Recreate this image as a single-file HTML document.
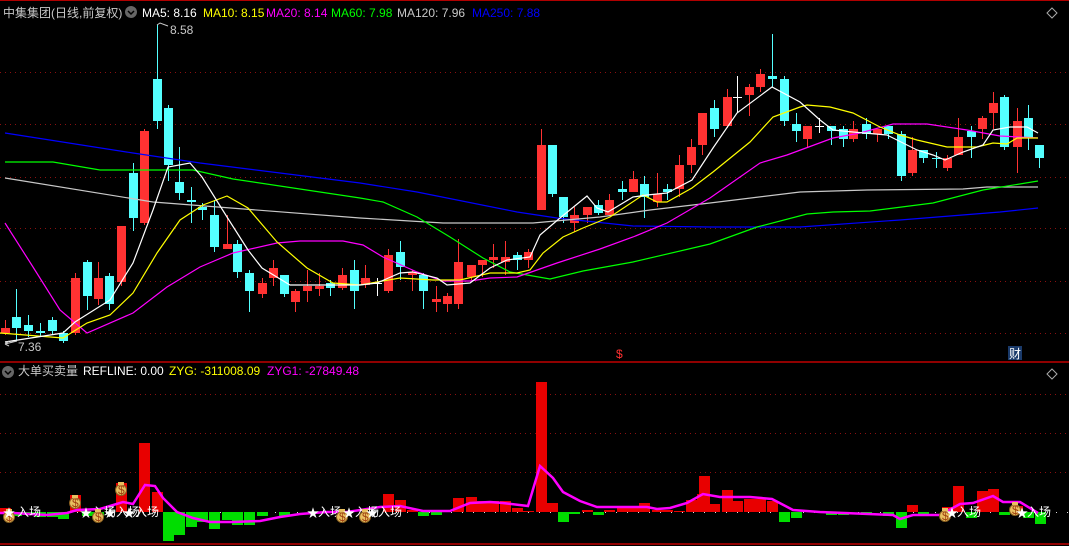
<!DOCTYPE html>
<html><head><meta charset="utf-8">
<style>
html,body{margin:0;padding:0;background:#000;width:1069px;height:546px;overflow:hidden}
svg{display:block}
text{font-family:"Liberation Sans","Noto Sans CJK SC",sans-serif;font-size:12px}
</style></head><body>
<svg id="s" width="1069" height="546" xmlns="http://www.w3.org/2000/svg">
<rect width="1069" height="546" fill="#000"/>
<line x1="0" y1="0.5" x2="1069" y2="0.5" stroke="#b00000"/>
<g stroke="#8a1010" stroke-dasharray="1,4" stroke-width="1">
<line x1="0" y1="72.5" x2="1069" y2="72.5"/><line x1="0" y1="124.5" x2="1069" y2="124.5"/>
<line x1="0" y1="177.5" x2="1069" y2="177.5"/><line x1="0" y1="228.5" x2="1069" y2="228.5"/>
<line x1="0" y1="281.5" x2="1069" y2="281.5"/><line x1="0" y1="333.5" x2="1069" y2="333.5"/>
<line x1="0" y1="394.5" x2="1069" y2="394.5"/><line x1="0" y1="433.5" x2="1069" y2="433.5"/>
<line x1="0" y1="472.5" x2="1069" y2="472.5"/>
</g>
<line x1="0" y1="512.5" x2="1069" y2="512.5" stroke="#ddd" stroke-dasharray="1,10"/>
<line x1="0" y1="362" x2="1069" y2="362" stroke="#c00000" stroke-width="1.5"/>
<line x1="0" y1="544" x2="1069" y2="544" stroke="#c00000" stroke-width="1.5"/>
<g id="bars"></g>
<g id="cand"></g>
<g fill="none" stroke-width="1.2">
<polyline stroke="#0000ff" points="5,133 133,153 200,163 360,183 417,192 517,212 557,218 633,226 710,227 800,227 900,220 1000,212 1038,208"/>
<polyline stroke="#c8c8c8" points="5,178 153,202 360,218 443,223 533,223 600,217 650,210 710,203 800,192 867,190 963,189 987,187 1038,187"/>
<polyline stroke="#00ff00" points="5,162 53,162 100,170 193,170 233,179 360,198 383,202 417,217 450,237 483,258 510,272 550,279 583,271 633,262 710,244 757,227 807,214 833,212 870,211 933,203 983,190 1038,181"/>
<polyline stroke="#ff00ff" points="5,223 33,267 60,310 87,333 133,313 167,287 200,267 233,253 277,243 300,241 343,241 363,245 383,257 417,272 443,281 470,281 490,278 517,277 537,270 557,263 600,249 633,237 667,223 710,198 760,163 787,155 833,138 860,133 893,124 927,124 967,130 1000,136 1038,138"/>
<polyline stroke="#ffff00" points="0,333 63,338 87,323 110,315 133,293 157,253 180,220 203,205 227,196 248,208 277,242 307,268 333,283 360,285 400,278 433,280 460,280 490,273 517,273 530,270 543,253 563,237 583,228 610,217 643,195 657,202 667,202 692,188 713,172 750,142 773,117 800,107 807,105 830,107 853,113 880,127 900,135 917,140 947,147 977,147 993,143 1007,144 1017,138 1038,138"/>
<polyline stroke="#ffffff" points="5,342 63,333 75,322 110,300 133,263 153,210 168,167 190,163 202,177 227,217 248,250 262,268 290,285 360,285 377,283 400,273 413,272 437,278 447,285 470,283 490,268 507,260 530,257 540,235 560,218 587,196 597,208 608,212 633,197 647,195 667,193 692,180 713,148 737,113 772,87 800,102 820,120 833,130 853,132 887,135 917,150 933,155 945,160 963,152 983,145 993,130 1010,127 1027,127 1038,133"/>
<polyline stroke="#ff00ff" stroke-width="2.5" points="0,513 13,513 47,515 67,513 77,510 100,509 123,502 133,504 145,485 155,486 163,498 177,512 193,518 210,522 233,522 260,521 280,517 300,514 313,513 327,512 347,512 367,509 380,507 400,506 423,511 450,511 470,503 490,502 503,503 528,506 540,466 553,478 563,492 580,501 597,507 647,507 657,509 670,508 687,503 703,494 720,497 750,497 772,499 793,510 820,512 893,515 900,519 913,515 940,515 960,504 973,503 993,496 1003,502 1020,502 1038,513"/>
</g>
<g id="marks"></g>
<!-- labels -->
<text x="3" y="17" fill="#c8c8c8" font-size="13">中集集团(日线,前复权)</text>
<circle cx="131" cy="12" r="6" fill="#666"/><path d="M128 11 l3 3 l3 -3" stroke="#000" stroke-width="1.5" fill="none"/>
<text x="142" y="17" fill="#fff">MA5: 8.16</text>
<text x="203" y="17" fill="#ffff00">MA10: 8.15</text>
<text x="266" y="17" fill="#ff00ff">MA20: 8.14</text>
<text x="331" y="17" fill="#00ff00">MA60: 7.98</text>
<text x="397" y="17" fill="#c8c8c8">MA120: 7.96</text>
<text x="472" y="17" fill="#0000ff">MA250: 7.88</text>
<path d="M1052 8 l5 5 l-5 5 l-5 -5z" fill="none" stroke="#aaa"/>
<path d="M1052 369 l5 5 l-5 5 l-5 -5z" fill="none" stroke="#aaa"/>
<path d="M157 25 l3 -2 l8 3" stroke="#ccc" fill="none"/>
<text x="170" y="34" fill="#c8c8c8">8.58</text>
<path d="M6 341 l0 3 M5 344 l12 -3 M5 344 l4 -3 M5 344 l4 2" stroke="#ccc" fill="none"/>
<text x="18" y="351" fill="#c8c8c8">7.36</text>
<text x="616" y="358" fill="#ff3030" font-size="11">$</text>
<rect x="1008" y="346" width="14" height="14" fill="#1a3a6a"/>
<text x="1009" y="358" fill="#fff" font-size="12">财</text>
<circle cx="8" cy="372" r="6" fill="#666"/><path d="M5 371 l3 3 l3 -3" stroke="#000" stroke-width="1.5" fill="none"/>
<text x="18" y="375" fill="#c8c8c8" font-size="13">大单买卖量</text>
<text x="83" y="375" fill="#fff">REFLINE: 0.00</text>
<text x="169" y="375" fill="#ffff00">ZYG: -311008.09</text>
<text x="267" y="375" fill="#ff00ff">ZYG1: -27849.48</text>
</svg>
<script>
var NS="http://www.w3.org/2000/svg";
function el(p,t,a){var e=document.createElementNS(NS,t);for(var k in a)e.setAttribute(k,a[k]);p.appendChild(e);return e;}
var C=[[5,'r',328,333,320,335],[16,'c',317,328,289,341],[28,'c',325,331,315,337],[40,'c',331,333,323,337],[52,'c',320,331,317,335],[63,'c',333,341,331,343],[75,'r',278,333,273,335],[87,'c',262,296,260,310],[98,'r',278,299,262,305],[109,'c',276,304,273,310],[121,'r',226,282,226,286],[133,'c',173,218,163,231],[144,'r',131,223,129,225],[157,'c',79,121,25,129],[168,'c',108,165,105,181],[179,'c',182,193,147,200],[191,'c',200,202,187,223],[202,'c',207,210,203,220],[214,'c',215,247,200,252],[227,'r',244,249,215,249],[237,'c',244,272,240,278],[249,'c',273,291,270,312],[262,'r',283,294,278,298],[273,'r',268,278,260,286],[284,'c',275,294,275,297],[295,'r',291,302,289,312],[307,'r',286,291,270,302],[319,'r',286,289,273,296],[330,'c',283,288,280,296],[342,'r',275,288,268,290],[354,'c',270,291,260,309],[365,'r',278,285,265,288],[377,'w',283,284,278,296],[388,'r',255,291,249,293],[400,'c',252,267,241,280],[412,'r',272,275,270,291],[423,'c',275,291,273,309],[436,'r',299,302,286,312],[447,'r',296,304,293,312],[458,'r',262,304,239,309],[471,'r',265,277,265,280],[482,'r',260,265,260,277],[493,'r',257,260,244,268],[505,'r',257,262,241,275],[517,'c',255,260,252,270],[528,'r',252,260,249,268],[541,'r',145,210,129,210],[552,'c',145,194,145,197],[563,'c',197,217,197,223],[574,'r',215,223,207,232],[587,'r',207,215,207,223],[598,'c',205,213,200,215],[609,'r',200,215,194,215],[622,'c',189,192,181,200],[633,'r',179,192,171,192],[644,'c',184,197,176,218],[657,'r',194,202,173,207],[667,'c',189,192,184,200],[679,'r',165,189,155,197],[691,'r',147,165,139,173],[702,'r',113,145,113,155],[714,'c',108,129,100,137],[727,'r',97,126,89,128],[737,'w',97,98,76,113],[749,'r',87,95,84,116],[760,'r',74,87,69,92],[772,'c',76,79,34,87],[784,'c',79,121,76,126],[796,'c',124,131,113,142],[807,'r',126,139,126,147],[819,'w',126,127,118,133],[831,'c',126,131,126,145],[843,'c',129,139,126,147],[853,'r',129,139,121,142],[866,'c',124,134,118,139],[877,'r',129,134,129,142],[888,'c',126,134,126,139],[901,'c',134,176,131,181],[912,'r',150,173,137,176],[923,'c',150,158,150,163],[936,'c',158,159,152,168],[947,'r',158,168,155,171],[958,'r',137,155,118,155],[971,'c',131,137,126,158],[982,'r',118,129,116,139],[993,'r',103,113,92,129],[1004,'c',97,147,95,150],[1017,'r',121,147,108,173],[1028,'c',118,138,105,150],[1039,'c',145,158,145,168]];
var g=document.getElementById('cand');
C.forEach(function(c){var col=c[1]=='r'?'#ff3232':(c[1]=='c'?'#54ffff':'#fff');
el(g,'line',{x1:c[0]+.5,x2:c[0]+.5,y1:c[4],y2:c[5],stroke:col});
var h=Math.max(1,c[3]-c[2]);el(g,'rect',{x:c[0]-4,y:c[2],width:9,height:h,fill:col});});
// lower bars: [x, top or bottom value] positive (red) if v<512
var B=[[5,508],[16,516],[28,515],[40,517],[52,517],[63,519],[75,495],[87,516],[98,516],[121,483],[144,443],[157,492],[168,541],[179,535],[191,527],[202,522],[214,529],[227,520],[237,525],[249,525],[262,516],[284,516],[388,494],[400,500],[412,510],[423,516],[436,515],[458,498],[471,497],[482,501],[493,501],[505,501],[517,508],[528,511],[541,382],[552,503],[563,522],[574,514],[587,510],[598,515],[609,510],[622,508],[633,508],[644,503],[657,510],[667,510],[679,511],[691,500],[702,494],[704,476],[714,504],[727,490],[737,501],[749,499],[760,499],[772,501],[784,522],[796,518],[831,515],[843,515],[866,515],[888,516],[901,528],[912,505],[923,516],[947,507],[958,486],[971,518],[982,491],[993,489],[1004,515],[1017,506],[1028,518],[1040,524]];
var gb=document.getElementById('bars');
B.forEach(function(b){var red=b[1]<512;
el(gb,'rect',{x:b[0]-5,y:red?b[1]:512,width:11,height:Math.abs(512-b[1]),fill:red?'#e80000':'#00dd00'});});
var gm=document.getElementById('marks');
function star(x,y){el(gm,'text',{x:x,y:y,fill:'#fff','font-size':'13'}).textContent='★';}
function word(x,y){el(gm,'text',{x:x,y:y,fill:'#fff','font-size':'12'}).textContent='入场';}
function bag(x,y){el(gm,'circle',{cx:x,cy:y,r:5.5,fill:'#e8c060',stroke:'#8a6020'});el(gm,'rect',{x:x-3,y:y-8,width:6,height:3,fill:'#e8c060'});
var t=el(gm,'text',{x:x-3,y:y+4,fill:'#a04010','font-size':'9'});t.textContent='$';}
[[3,9],[80,98],[104,121],[307,342],[343,365],[945,945],[1015,1015]].forEach(function(){});
bag(9,517);star(3,517);word(17,516);
bag(75,503);star(80,517);word(92,516);
bag(98,517);star(104,517);word(116,516);
bag(121,490);star(123,517);word(135,516);
star(307,517);word(318,516);bag(342,517);star(343,517);word(355,516);
bag(365,517);star(366,517);word(378,516);
bag(945,516);star(946,517);word(957,516);
bag(1015,510);star(1016,517);word(1027,516);
</script>
</body></html>
